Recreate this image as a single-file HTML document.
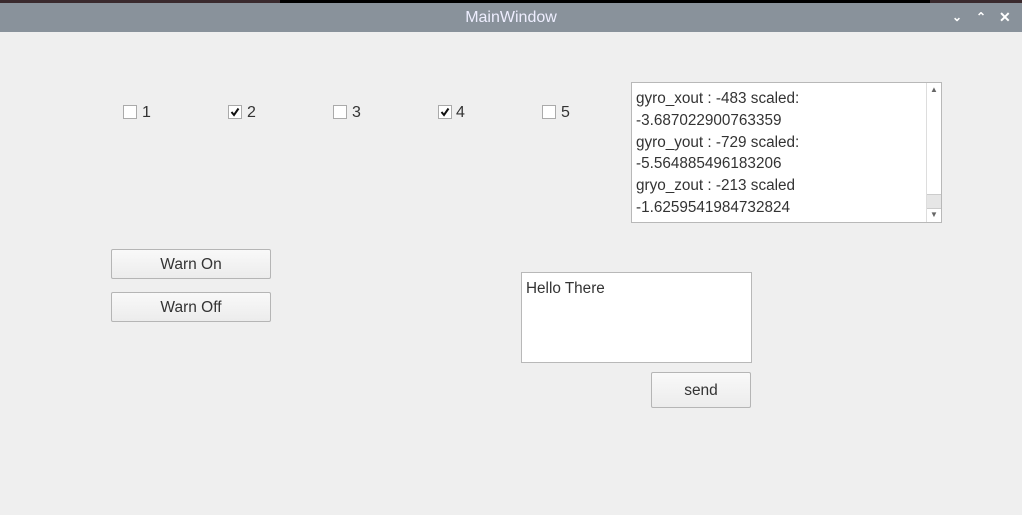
<!DOCTYPE html>
<html><head><style>
body{margin:0;width:1022px;height:515px;overflow:hidden;background:#3a2a2e;font-family:"Liberation Sans",sans-serif;position:relative}
.win{position:absolute;left:0;top:3px;width:1022px;height:512px;background:#efefef}
.tb{position:absolute;left:0;top:0;width:1022px;height:29px;background:#89929b;color:#eef;font-size:16px;text-align:center;line-height:30px}
.ab{position:absolute;color:#fff;font-size:12px;top:0;line-height:29px;font-weight:bold}
.cb{position:absolute;width:12px;height:12px;border:1px solid #aaa;background:#fff;top:102px}
.cb svg{position:absolute;left:1px;top:1px}
.lb{position:absolute;top:101px;font-size:16px;color:#333}
.btn{position:absolute;border:1px solid #b5b5b5;border-radius:2px;background:linear-gradient(#f9f9f9,#ececec);text-align:center;font-size:15.5px;color:#333;box-sizing:border-box}
.ta{position:absolute;background:#fff;border:1px solid #b8b8b8;box-sizing:border-box;font-size:15.3px;color:#333}
</style></head><body>
<div style="position:absolute;left:280px;top:0;width:650px;height:3px;background:#000"></div>
<div class="win">
<div class="tb">MainWindow</div>
<div class="ab" style="left:952px">&#8964;</div>
<div class="ab" style="left:976px">&#8963;</div>
<div class="ab" style="left:999px;font-size:14px">✕</div>
<div class="cb" style="left:123px"></div><div class="lb" style="left:142px">1</div>
<div class="cb" style="left:228px"><svg width="10" height="10"><path d="M1.5 5 L4 8 L8.5 1.5" stroke="#111" stroke-width="2" fill="none"/></svg></div><div class="lb" style="left:247px">2</div>
<div class="cb" style="left:333px"></div><div class="lb" style="left:352px">3</div>
<div class="cb" style="left:438px"><svg width="10" height="10"><path d="M1.5 5 L4 8 L8.5 1.5" stroke="#111" stroke-width="2" fill="none"/></svg></div><div class="lb" style="left:456px">4</div>
<div class="cb" style="left:542px"></div><div class="lb" style="left:561px">5</div>
<div class="ta" style="left:631px;top:79px;width:311px;height:141px;padding:5px 0 0 4px;line-height:21.8px">gyro_xout : -483 scaled:<br>-3.687022900763359<br>gyro_yout : -729 scaled:<br>-5.564885496183206<br>gryo_zout : -213 scaled<br>-1.6259541984732824
<div style="position:absolute;right:0;top:0;width:14px;height:139px;border-left:1px solid #ddd;background:#fff">
<div style="position:absolute;top:0;left:0;width:14px;height:14px;font-size:8px;text-align:center;line-height:14px;color:#666">▲</div>
<div style="position:absolute;top:111px;left:0;width:14px;height:13px;background:#e6e6e6;border-top:1px solid #ccc;border-bottom:1px solid #ccc"></div>
<div style="position:absolute;bottom:0;left:0;width:14px;height:14px;font-size:8px;text-align:center;line-height:14px;color:#666">▼</div>
</div></div>
<div class="btn" style="left:111px;top:246px;width:160px;height:30px;line-height:29px">Warn On</div>
<div class="btn" style="left:111px;top:289px;width:160px;height:30px;line-height:29px">Warn Off</div>
<div class="ta" style="left:521px;top:269px;width:231px;height:91px;padding:7px 0 0 4px">Hello There</div>
<div class="btn" style="left:651px;top:369px;width:100px;height:36px;line-height:35px">send</div>
</div>
</body></html>
